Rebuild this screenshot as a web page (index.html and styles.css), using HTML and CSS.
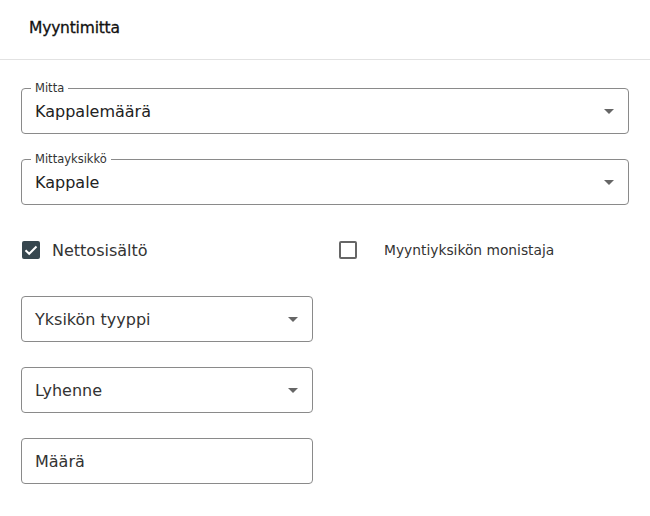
FILE: index.html
```html
<!DOCTYPE html>
<html lang="fi">
<head>
<meta charset="utf-8">
<link rel="stylesheet" href="styles.css">
</head>
<body>
<div class="panel">
  <div class="header">Myyntimitta</div>
  <div class="content">
    <div class="field select">
      <span class="label">Mitta</span>
      <span class="value">Kappalemäärä</span>
      <span class="arrow"></span>
    </div>
    <div class="field select">
      <span class="label">Mittayksikkö</span>
      <span class="value">Kappale</span>
      <span class="arrow"></span>
    </div>
    <div class="checks">
      <div class="check">
        <span class="box checked">
          <svg viewBox="0 0 18 18" width="18" height="18"><path d="M3.5 9.2 L7.2 12.8 L14.5 5.5" fill="none" stroke="#fff" stroke-width="2"/></svg>
        </span>
        <span class="check-label">Nettosisältö</span>
      </div>
      <div class="check second">
        <span class="box"></span>
        <span class="check-label small">Myyntiyksikön monistaja</span>
      </div>
    </div>
    <div class="field half select">
      <span class="value placeholder">Yksikön tyyppi</span>
      <span class="arrow"></span>
    </div>
    <div class="field half select">
      <span class="value placeholder">Lyhenne</span>
      <span class="arrow"></span>
    </div>
    <div class="field half">
      <span class="value placeholder">Määrä</span>
    </div>
  </div>
</div>
</body>
</html>
```

FILE: styles.css
```css
* { box-sizing: border-box; }
html, body { margin: 0; padding: 0; background: #fff; }
body {
  font-family: "DejaVu Sans", "Open Sans", sans-serif;
  color: #222;
}
.panel { width: 650px; }
.header {
  height: 60px;
  border-bottom: 1px solid #e2e2e2;
  padding: 0 29px 3px 29px;
  display: flex;
  align-items: center;
  font-size: 15.5px;
  font-weight: normal;
  color: #111;
  letter-spacing: -0.2px;
  -webkit-text-stroke: 0.3px #111;
}
.content {
  padding: 28px 21px 0 21px;
  display: flex;
  flex-direction: column;
}
.field {
  position: relative;
  height: 46px;
  border: 1px solid #8a8a8a;
  border-radius: 4px;
  display: flex;
  align-items: center;
  padding: 0 13px;
  margin-bottom: 25px;
}
.field.half { width: 292px; }
.label {
  position: absolute;
  top: -8px;
  left: 9px;
  padding: 0 4px;
  background: #fff;
  font-size: 11.5px;
  line-height: 14px;
  color: #333;
}
.value {
  font-size: 16px;
  color: #222;
  flex: 1;
}
.placeholder { color: #333; }
.arrow {
  width: 0; height: 0;
  border-left: 5px solid transparent;
  border-right: 5px solid transparent;
  border-top: 5px solid #666;
  margin-right: 1px;
}
.checks {
  display: flex;
  height: 40px;
  align-items: center;
  margin-top: 0;
  margin-bottom: 26px;
}
.check { display: flex; align-items: center; }
.check:first-child { width: 317px; }
.box {
  width: 18px; height: 18px;
  border: 2px solid #666;
  border-radius: 2px;
  margin-left: 1px;
  display: flex;
}
.box.checked { background: #37474f; border: none; }
.check-label { margin-left: 12px; font-size: 16px; color: #333; }
.check-label.small { font-size: 13.8px; margin-left: 27px; }
```
